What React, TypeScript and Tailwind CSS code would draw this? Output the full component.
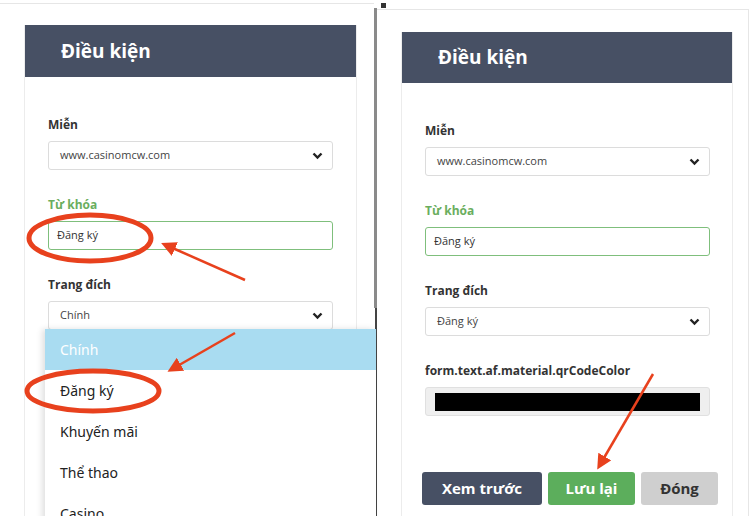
import type { ReactNode } from "react";

const FONT = { fontFamily: '"Open Sans", "Noto Sans", sans-serif' };

/** Small bold down chevron used in native-looking selects. */
function Chevron() {
  return (
    <svg width="11" height="8" viewBox="0 0 11 8" className="shrink-0">
      <polyline points="1.5,1.5 5.5,5.5 9.5,1.5" fill="none" stroke="#222" strokeWidth="2.4" />
    </svg>
  );
}

function Label({ children, green }: { children: ReactNode; green?: boolean }) {
  return (
    <div className={"h-4 text-[12px] leading-4 font-bold " + (green ? "text-[#6aae5e]" : "text-[#333]")}>
      {children}
    </div>
  );
}

function Select({ value }: { value: string }) {
  return (
    <div className="mt-2 h-[29px] flex items-center justify-between rounded-[3px] border border-[#dcdcdc] pl-[11px] pr-[9px] text-[11px] text-[#444]">
      <span>{value}</span>
      <Chevron />
    </div>
  );
}

function TextInput({ value }: { value: string }) {
  return (
    <div className="mt-2 h-[29px] flex items-center rounded-[3px] border border-[#7fbf7c] pl-[8px] text-[11px] text-[#333]">
      {value}
    </div>
  );
}

function Header({ pl, h }: { pl: string; h: string }) {
  return (
    <div className={"bg-[#475064] flex items-center text-white text-[19px] font-bold " + pl + " " + h}>
      Điều kiện
    </div>
  );
}

const OPTIONS = ["Đăng ký", "Khuyến mãi", "Thể thao", "Casino"];

export default function App() {
  return (
    <div className="relative w-[756px] h-[516px] overflow-hidden bg-white flex" style={FONT}>
      {/* Left screenshot */}
      <div className="w-[374px] h-full pt-[3px]">
        <div className="h-full border-t border-[#e6e6e6]">
          <div className="ml-[24px] mt-[21px] w-[333px] h-[600px] border-x border-[#ececec]">
            <Header pl="pl-[36px]" h="h-[52px]" />
            <div className="pl-[23px] pr-[23px] pt-[40px]">
              <Label>Miễn</Label>
              <Select value="www.casinomcw.com" />
              <div className="mt-[27px]">
                <Label green>Từ khóa</Label>
                <TextInput value="Đăng ký" />
              </div>
              <div className="mt-[27px]">
                <Label>Trang đích</Label>
                <Select value="Chính" />
              </div>
            </div>
          </div>
        </div>
      </div>

      {/* Divider / scrollbar */}
      <div className="w-[3px] mt-[8px] h-full flex flex-col">
        <div className="h-[300px] bg-[#8a8a8a]" />
        <div className="flex-1 w-[2px] ml-[1px] bg-[#444]" />
      </div>

      {/* Right screenshot */}
      <div className="flex-1 h-full pt-[9px] relative">
        <div className="absolute left-[4px] top-[3px] w-[5px] h-[5px] bg-[#333]" />
        <div className="h-full w-[372px] border-t border-r border-[#e6e6e6]">
          <div className="ml-[24px] mt-[22px] w-[332px] h-[600px] border-x border-[#ececec]">
            <Header pl="pl-[36px]" h="h-[51px]" />
            <div className="pl-[23px] pr-[22px] pt-[40px]">
              <Label>Miễn</Label>
              <Select value="www.casinomcw.com" />
              <div className="mt-[27px]">
                <Label green>Từ khóa</Label>
                <TextInput value="Đăng ký" />
              </div>
              <div className="mt-[27px]">
                <Label>Trang đích</Label>
                <Select value="Đăng ký" />
              </div>
              <div className="mt-[27px]">
                <Label>form.text.af.material.qrCodeColor</Label>
                <div className="mt-2 h-[29px] rounded-[3px] border border-[#e0e0e0] bg-[#efefef] px-[9px] flex items-center">
                  <div className="h-[18px] w-full bg-black" />
                </div>
              </div>
              <div className="mt-[56px] -ml-[3px] flex gap-[6px] text-[15px] font-bold">
                <div className="shrink-0 w-[120px] h-[33px] rounded-[3px] bg-[#475064] text-white flex items-center justify-center">
                  Xem trước
                </div>
                <div className="shrink-0 w-[87px] h-[33px] rounded-[3px] bg-[#5cae5c] text-white flex items-center justify-center">
                  Lưu lại
                </div>
                <div className="shrink-0 w-[77px] h-[33px] rounded-[3px] bg-[#cfcfcf] text-[#333] flex items-center justify-center">
                  Đóng
                </div>
              </div>
            </div>
          </div>
        </div>
      </div>

      {/* Open dropdown on the left */}
      <div
        className="absolute left-[45px] top-[329px] w-[331px] h-[200px] bg-white shadow-[-3px_0_6px_rgba(0,0,0,0.12)] text-[14px] text-[#222]"
        style={{ fontFamily: '"Noto Sans", "Open Sans", sans-serif' }}
      >
        <div className="h-[41px] bg-[#a9dcf1] text-white flex items-center pl-[15px]">Chính</div>
        {OPTIONS.map((o) => (
          <div key={o} className="h-[41px] flex items-center pl-[15px]">
            {o}
          </div>
        ))}
      </div>

      {/* Red annotations */}
      <svg className="absolute inset-0 pointer-events-none" width="756" height="516">
        <defs>
          <marker id="ah" markerWidth="6" markerHeight="6" refX="3" refY="3" orient="auto" markerUnits="strokeWidth">
            <path d="M0,0 L6,3 L0,6 Z" fill="#e8411d" />
          </marker>
        </defs>
        <ellipse cx="90" cy="238" rx="61" ry="23" fill="none" stroke="#e8411d" strokeWidth="5" />
        <ellipse cx="93" cy="391" rx="66" ry="20" fill="none" stroke="#e8411d" strokeWidth="5" />
        <line x1="245" y1="280" x2="168" y2="246" stroke="#e8411d" strokeWidth="2.5" markerEnd="url(#ah)" />
        <line x1="235" y1="333" x2="174" y2="368" stroke="#e8411d" strokeWidth="2.5" markerEnd="url(#ah)" />
        <line x1="653" y1="374" x2="601" y2="463" stroke="#e8411d" strokeWidth="2.5" markerEnd="url(#ah)" />
      </svg>
    </div>
  );
}
